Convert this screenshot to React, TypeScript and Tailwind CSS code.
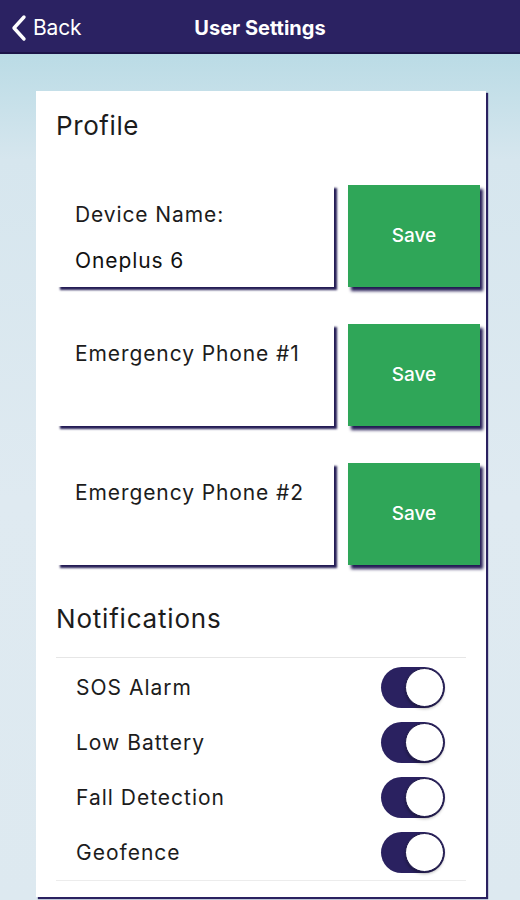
import React from "react";

function InputRow({ label, value }: { label: string; value?: string }) {
  return (
    <div className="flex h-[102px] gap-[14px]">
      <div className="w-[277px] h-full bg-white px-[18px] pt-[17px] shadow-[3px_3px_2px_#241c55]">
        <div className="text-[21px] leading-[26px] tracking-[0.9px] text-[#1c1c1c]">{label}</div>
        {value && <div className="mt-[20px] text-[21px] leading-[26px] tracking-[0.9px] text-[#111]">{value}</div>}
      </div>
      <button className="w-[132px] h-full bg-[#2fa658] text-white text-[19px] font-medium shadow-[3px_4px_3px_#241c55] flex items-center justify-center">
        Save
      </button>
    </div>
  );
}

function Toggle() {
  return (
    <div className="w-[64px] h-[41px] rounded-full bg-[#2a2160] relative">
      <div className="absolute right-[1px] top-[1px] w-[39px] h-[39px] rounded-full bg-white border border-[#1d1748] shadow-[0_2px_3px_rgba(0,0,0,0.3)]" />
    </div>
  );
}

function ToggleRow({ label }: { label: string }) {
  return (
    <div className="h-[55px] flex items-center justify-between pl-[20px] pr-[21px]">
      <span className="text-[21px] tracking-[1px] text-[#1c1c1c]">{label}</span>
      <Toggle />
    </div>
  );
}

export default function App() {
  return (
    <div
      className="w-[520px] h-[900px] overflow-hidden flex flex-col bg-[linear-gradient(180deg,#a7d2df_0px,#bcdce6_60px,#d6e6ee_160px,#dfeaf1_500px,#dde9f0_900px)]"
      style={{ fontFamily: "Inter, 'Liberation Sans', sans-serif" }}
    >
      <header className="h-[54px] shrink-0 bg-[#2b2262] border-b-2 border-[#1b1448] flex items-center relative pt-[3px]">
        <div className="flex items-center pl-[10px] gap-[5px] text-white">
          <svg width="18" height="28" viewBox="0 0 18 28" fill="none">
            <path d="M14 3 L4 14 L14 25" stroke="white" strokeWidth="3.4" strokeLinecap="round" strokeLinejoin="round" />
          </svg>
          <span className="text-[21px] tracking-[-0.2px]">Back</span>
        </div>
        <div className="absolute left-0 right-0 text-center text-white text-[20px] font-bold pointer-events-none">
          User Settings
        </div>
      </header>
      <div className="pt-[37px] pl-[36px]">
        <div className="w-[450px] h-[806px] bg-white shadow-[2px_2px_1px_#2a2160] pl-[20px] pt-[19px] pb-[16px]">
          <div className="text-[26px] leading-[32px] tracking-[0.6px] text-[#1c1c1c]">Profile</div>
          <div className="mt-[43px] flex flex-col gap-[37px] pl-[1px]">
            <InputRow label="Device Name:" value="Oneplus 6" />
            <InputRow label="Emergency Phone #1" />
            <InputRow label="Emergency Phone #2" />
          </div>
          <div className="mt-[38px] text-[26px] leading-[32px] tracking-[0.8px] text-[#1c1c1c]">Notifications</div>
          <div className="mt-[22px] mr-[20px] border-t border-[#e6e6e6] pt-[2px]">
            <ToggleRow label="SOS Alarm" />
            <ToggleRow label="Low Battery" />
            <ToggleRow label="Fall Detection" />
            <ToggleRow label="Geofence" />
          </div>
          <div className="mr-[20px] border-t border-[#ececec]" />
        </div>
      </div>
    </div>
  );
}
